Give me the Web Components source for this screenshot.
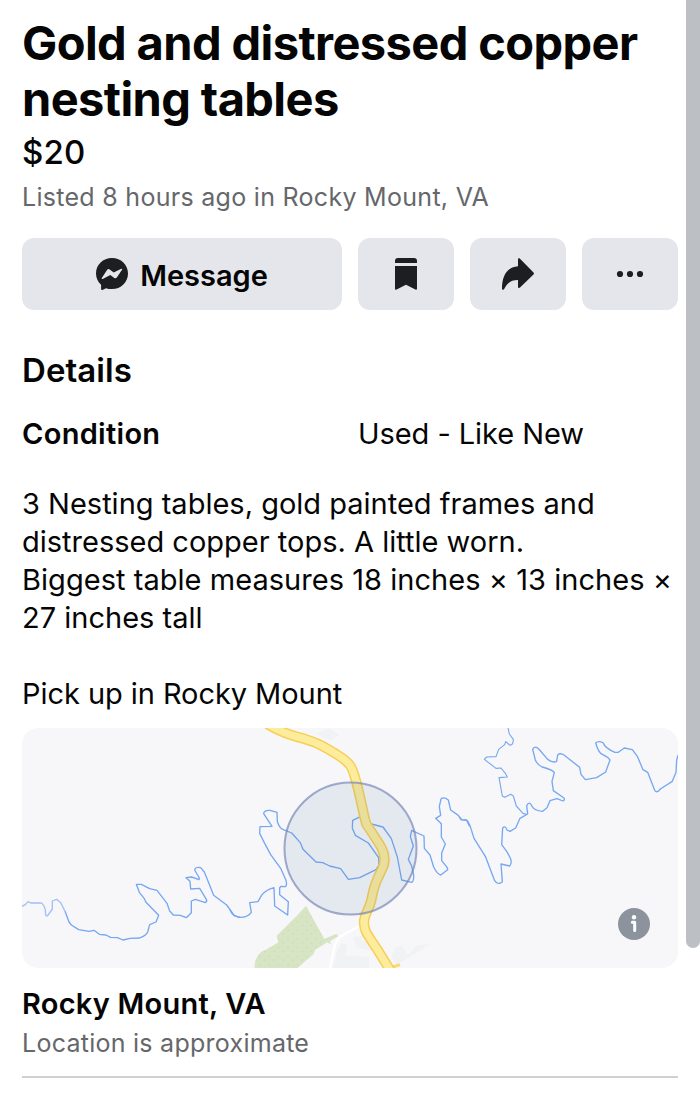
<!DOCTYPE html>
<html lang="en">
<head>
<meta charset="utf-8">
<title>Gold and distressed copper nesting tables</title>
<style>
html,body{margin:0;height:1100px;overflow:hidden;background:#fff}
body{font-family:Inter,"Liberation Sans",sans-serif;font-feature-settings:"calt" 0;color:#050505;-webkit-font-smoothing:antialiased}
</style>
</head>
<body>
<listing-page></listing-page>
<script>
const define = (name, html) => {
  const t = document.createElement('template');
  t.innerHTML = html;
  customElements.define(name, class extends HTMLElement {
    constructor() {
      super();
      this.attachShadow({ mode: 'open' }).appendChild(t.content.cloneNode(true));
    }
  });
};

define('listing-header', `
<style>
:host{display:block;padding-top:15px}
h1{margin:0;font-size:47px;line-height:56px;font-weight:700;letter-spacing:-.6px;white-space:nowrap}
.price{margin-top:5px;font-size:33px;line-height:40px;font-weight:450;letter-spacing:.2px}
.meta{margin-top:9px;font-size:25px;line-height:32px;letter-spacing:.29px;color:#65676b;white-space:nowrap}
</style>
<h1><slot name="title"></slot></h1>
<div class="price"><slot name="price"></slot></div>
<div class="meta"><slot name="meta"></slot></div>`);

define('action-button', `
<style>
:host{display:flex;align-items:center;justify-content:center;height:72px;border-radius:12px;background:#e4e6eb;font-size:29px;font-weight:600}
::slotted(svg){display:block;width:32px;height:32px;fill:#1c1e21;flex:none}
::slotted(span){margin-left:12px;line-height:38px;padding-top:3px}
</style><slot></slot>`);

define('action-bar', `
<style>
:host{display:grid;grid-template-columns:320px 96px 96px 96px;gap:16px;margin-top:25px}
span{letter-spacing:0}
</style>
<action-button>
  <svg viewBox="0 0 32 32"><path fill-rule="evenodd" d="M16 0C7 0 0 6.700 0 15.500c0 4.700 1.900 8.500 5.100 11.300v4.200c0 .8.6 1.200 1.300.9l3.600-1.600c1.900.6 3.800.8 6 .8 9 0 16-6.900 16-15.600S25 0 16 0ZM5.800 19.900 11.200 11.800Q12.300 10.400 13.700 11.500L17.700 14.600 25.300 10.800Q26.600 10.500 26 11.700L20.800 19.500Q19.700 20.900 18.300 19.900L14.300 16.900 6.700 20.900Q5.200 21.200 5.800 19.900Z"/></svg>
  <span>Message</span>
</action-button>
<action-button><svg viewBox="0 0 32 32"><path d="M5 5V3q0-3 3-3h16q3 0 3 3v2Z"/><path d="M5 8h22v22.500q0 1.800-1.600 1L16 26.800 6.600 31.500Q5 32.300 5 30.500Z"/></svg></action-button>
<action-button><svg viewBox="0 0 32 32"><path d="M16 1.500C16 .2 17.200-.1 18 .7l13.500 13.700q.9 1 0 2L18 29.500c-.8.8-2 .4-2-.8V22c-6.500-.1-10.700 2.500-13.700 8.800C1.700 32.200 0 32 0 30.400 0 17.500 5.500 9 16 8.200Z"/></svg></action-button>
<action-button><svg viewBox="0 0 32 32"><circle cx="6" cy="16" r="3.100"/><circle cx="16" cy="16" r="3.100"/><circle cx="26" cy="16" r="3.100"/></svg></action-button>`);

define('listing-details', `
<style>
:host{display:block;margin-top:40px;font-size:29px;line-height:38px}
h2{margin:0;font-size:33px;line-height:40px;font-weight:600;letter-spacing:.05px}
.row{display:grid;grid-template-columns:336px 1fr;margin-top:25px}
b{font-weight:600;letter-spacing:.3px}
.row span{letter-spacing:-.06px}
.desc{margin-top:32px}
::slotted(div){min-height:38px;white-space:nowrap}
</style>
<h2>Details</h2>
<div class="row"><b>Condition</b><span><slot name="condition"></slot></span></div>
<div class="desc"><slot></slot></div>`);

define('location-map', `
<style>
:host{display:block;margin-top:15px;height:240px;border-radius:16px;overflow:hidden;background:#f7f7f9}
svg{display:block;width:656px;height:240px}
.w{fill:none;stroke:#76a7f2;stroke-width:4;stroke-linejoin:round;stroke-linecap:round}
</style>
<svg viewBox="22 728 656 240">
<defs><pattern id="dots" width="28" height="26" patternUnits="userSpaceOnUse"><rect width="28" height="26" fill="#d7e5c5"/><circle cx="6" cy="7" r="2" fill="#c1d8aa"/><circle cx="20" cy="18" r="2" fill="#c1d8aa"/></pattern></defs>
<g transform="translate(230 720) scale(.333333)">
<path fill="#f1f2f4" d="M258 42 295 24l35 20-30 18zM370 652l25-5v15l35 10-5 20-45-8zM335 668l18 8-8 30 72 4v34H308l14-52zM495 682l20-4 18 28 30-30 37-4-60 38-40 24-12-18-6 4z"/>
<path d="M388 618 330 650q-14 14-18 36L300 744" fill="none" stroke="#fff" stroke-width="7"/>
<path fill="url(#dots)" d="M228 557 283 657l36-16 6 8-25 14 2 10-10-6-36 22-6 14-47 41H74q-2-30 20-49l16-7 35-21-5-20 62-61z"/>
</g>
<g class="w">
<g transform="translate(0 720) scale(.333333)">
<path stroke="#a0c0f5" d="M66 559 76 554 84 545 92 549H124Q133 555 136 570L137 586 142 588 157 567V543L170 538 182 548 196 576"/>
<path d="M196 576 207 606 214 615 236 629 267 634 282 631 298 643 318 645 332 652 352 653 369 660 390 655 419 654Q439 646 443 636L449 614 468 606 476 586 438 547 433 536 418 517 409 493 424 493 449 506 471 511 501 550 509 573 520 585 541 586 559 593 574 578V543L586 538 616 548Q622 545 619 538L599 505 572 507 570 484 558 473 575 471 597 479 598 474 584 450Q585 440 602 443L613 456 641 526 680 555 703 587 719 592"/>
</g>
<g transform="translate(230 720) scale(.333333)">
<path d="M0 569Q8 592 35 592 55 590 64 577L59 548 84 545 96 524Q108 510 132 503L134 558 173 585 175 545 149 524V503L153 499 166 500Q172 496 168 481L152 445 122 404 104 370 89 340 90 320 126 319 101 281Q102 270 120 271L141 277 142 305Q149 325 160 329L185 339 211 368 219 388 258 426 278 428 299 438 332 446 355 478 389 473 438 449 447 435 446 413 415 369 376 346 367 325 368 301 391 290"/>
<path d="M424 312 459 321 484 356 502 411 515 480 545 487Q552 484 551 465L545 438 535 418 550 378 541 350 545 331 582 348 583 385 600 405 611 441Q622 463 632 465L653 449 652 443 635 422V399L646 372 634 351V311L617 295 632 286 628 260 633 237Q641 229 655 240L662 270 685 286 693 299 710 300 718 318"/>
</g>
<g transform="translate(460 720) scale(.333333)">
<path d="M0 292 4 299 22 302 30 317 42 355 76 409 104 482Q114 497 127 485L123 432 149 438Q157 430 151 414L140 394 125 374 128 324Q136 315 141 330L150 334 167 324 180 295 203 282 200 257Q208 240 217 260 222 271 248 274L261 263 270 242 291 236 309 243Q315 240 312 234L280 212 276 184 283 158Q279 150 247 141 233 136 226 120L218 88Q225 74 239 90L263 118Q280 130 290 124L293 105Q301 97 313 106L359 142 363 163 376 179 410 173 437 156 450 120 444 113 422 100Q414 92 407 69 415 61 430 69 434 84 465 97L475 97 493 84 517 89 532 109 549 149 563 157 584 211Q591 221 601 207L637 184 648 157 650 120 654 106"/>
<path d="M144 24 148 42 160 58Q160 77 149 75L137 65 134 74 116 88 108 110 80 111 73 118 108 145 123 144 136 160 142 171 117 173 127 228 134 232 152 223 160 228 169 258 189 280 199 283" stroke-width="3.400"/>
</g>
</g>
<g transform="translate(230 720) scale(.333333)" fill="none" stroke-linejoin="round">
<path d="m480 744 30-10" stroke="#fbd96f" stroke-width="9"/>
<path d="M112 12Q155 38 200 50C260 66 272 74 320 103S367 145 380 190C395 247 400 285 409 312L448 372Q475 415 455 450C434 490 430 510 424 540S400 585 402 610 410 640 443 690L480 750" stroke="#f7ce55" stroke-width="31"/>
<path d="M112 12Q155 38 200 50C260 66 272 74 320 103S367 145 380 190C395 247 400 285 409 312L448 372Q475 415 455 450C434 490 430 510 424 540S400 585 402 610 410 640 443 690L480 750" stroke="#fcec9b" stroke-width="22"/>
</g>
<circle cx="350.500" cy="848.500" r="66" fill="#42679a" fill-opacity=".1" stroke="#7484b5" stroke-opacity=".68" stroke-width="2"/>
<circle cx="634" cy="924" r="16" fill="#8c939d"/>
<circle cx="634" cy="917.300" r="2.200" fill="#fff"/>
<path d="M632.300 922.300H634.700V930.600" fill="none" stroke="#fff" stroke-width="3" stroke-linecap="round" stroke-linejoin="round"/>
</svg>`);

define('location-caption', `
<style>
:host{display:block;padding:17px 0;border-bottom:2px solid #ced0d4}
.place{font-size:29px;line-height:38px;font-weight:600;letter-spacing:.24px}
.note{margin-top:4px;font-size:25px;line-height:32px;letter-spacing:.26px;color:#65676b}
</style>
<div class="place"><slot name="place"></slot></div>
<div class="note"><slot name="note"></slot></div>`);

define('listing-page', `
<style>
:host{display:flex;justify-content:space-between;height:1100px;background:#fff}
main{width:656px;margin-left:22px}
.thumb{width:14px;height:948px;background:#bcc0c4;border-radius:0 0 7px 7px}
</style>
<main>
<listing-header>
  <span slot="title">Gold and distressed copper<br>nesting tables</span>
  <span slot="price">$20</span>
  <span slot="meta">Listed 8 hours ago in Rocky Mount, VA</span>
</listing-header>
<action-bar></action-bar>
<listing-details>
  <span slot="condition">Used - Like New</span>
  <div>3 Nesting tables, gold painted frames and</div>
  <div>distressed copper tops. A little worn.</div>
  <div style="letter-spacing:.04px">Biggest table measures 18 inches × 13 inches ×</div>
  <div>27 inches tall</div>
  <div></div>
  <div style="letter-spacing:-.06px">Pick up in Rocky Mount</div>
</listing-details>
<location-map></location-map>
<location-caption><span slot="place">Rocky Mount, VA</span><span slot="note">Location is approximate</span></location-caption>
</main>
<div class="thumb"></div>`);
</script>
</body>
</html>
